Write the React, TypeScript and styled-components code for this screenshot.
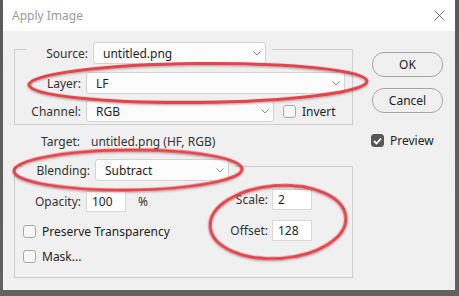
import React from 'react';
import styled, { createGlobalStyle } from 'styled-components';

const GlobalStyle = createGlobalStyle`
  html, body {
    margin: 0;
    padding: 0;
    background: #5c5c5c;
  }
  body {
    font-family: "Noto Sans", "Open Sans", sans-serif;
    font-size: 12px;
    color: #222;
  }
`;

const Screen = styled.div`
  width: 459px;
  height: 296px;
  overflow: hidden;
  background: linear-gradient(180deg, #5a5a5a 0%, #626262 100%);
`;

const Window = styled.div`
  position: relative;
  margin-left: 3px;
  width: 452px;
  height: 290px;
  background: #f0f0f0;
  display: flex;
  flex-direction: column;
`;

const TitleBar = styled.div`
  height: 31px;
  background: #ffffff;
  display: flex;
  align-items: center;
  justify-content: space-between;
  padding: 0 10px 0 9px;
`;

const Title = styled.span`
  color: #9b9b9b;
  font-size: 12px;
`;

const Body = styled.div`
  flex: 1;
  display: flex;
  gap: 19px;
  padding: 18px 0 0 11px;
`;

const LeftCol = styled.div`
  width: 339px;
  display: flex;
  flex-direction: column;
`;

const RightCol = styled.div`
  width: 71px;
  display: flex;
  flex-direction: column;
  padding-top: 3px;
`;

const GroupBox = styled.div<{ mt?: number }>`
  border: 1px solid #cdcdcd;
  margin-top: ${p => p.mt ?? 0}px;
  display: flex;
  flex-direction: column;
`;

const Legend = styled.div<{ ml: number; labelW: number }>`
  align-self: flex-start;
  margin: -8px 0 0 ${p => p.ml}px;
  padding: 0 6px;
  background: #f0f0f0;
  display: grid;
  grid-template-columns: ${p => p.labelW}px auto;
  column-gap: 5px;
  align-items: center;
`;

const Rows = styled.div`
  display: grid;
  grid-template-columns: 66px auto;
  column-gap: 5px;
  row-gap: 6px;
  align-items: center;
  padding: 8px 7px 2px 0;
`;

const Label = styled.span`
  text-align: right;
  color: #333;
  white-space: nowrap;
`;

const Select = styled.div<{ w: number }>`
  box-sizing: border-box;
  width: ${p => p.w}px;
  height: 22px;
  background: #fcfcfc;
  border: 1px solid #d3d3d3;
  border-radius: 3px;
  display: flex;
  align-items: center;
  justify-content: space-between;
  padding: 0 4px 0 9px;
  color: #1e1e28;
`;

const Chevron = () => (
  <svg width="8" height="5" viewBox="0 0 8 5">
    <path d="M0.5 0.5 L4 4 L7.5 0.5" fill="none" stroke="#8a8a8a" strokeWidth="1" />
  </svg>
);

const InlineRow = styled.div`
  display: flex;
  align-items: center;
`;

const Check = styled.span<{ checked?: boolean }>`
  box-sizing: border-box;
  width: 13px;
  height: 13px;
  border-radius: 3px;
  border: 1px solid ${p => (p.checked ? '#585858' : '#a8a8a8')};
  background: ${p => (p.checked ? '#585858' : '#f7f7f7')};
  display: inline-flex;
  align-items: center;
  justify-content: center;
  flex: none;
`;

const CheckText = styled.span`
  margin-left: 6px;
  color: #222;
  white-space: nowrap;
`;

const TargetRow = styled.div`
  display: grid;
  grid-template-columns: 66px auto;
  column-gap: 11px;
  margin-top: 9px;
  line-height: 16px;
`;

const Value = styled.span`
  color: #333;
`;

const BlendBody = styled.div`
  display: flex;
  justify-content: space-between;
  align-items: flex-start;
  padding: 8px 40px 14px 0;
`;

const BlendLeft = styled.div`
  display: flex;
  flex-direction: column;
`;

const BlendRight = styled.div`
  display: grid;
  grid-template-columns: auto 40px;
  column-gap: 4px;
  row-gap: 10px;
  align-items: center;
`;

const OpacityRow = styled.div`
  display: grid;
  grid-template-columns: 66px 40px auto;
  column-gap: 5px;
  align-items: center;
  margin-top: 2px;
`;

const Percent = styled.span`
  margin-left: 7px;
  color: #333;
`;

const NumInput = styled.div`
  box-sizing: border-box;
  width: 40px;
  height: 21px;
  background: #fff;
  border: 1px solid #d8d8d8;
  display: flex;
  align-items: center;
  padding-left: 5px;
  color: #1e1e28;
`;

const CheckRow = styled(InlineRow)<{ mt: number }>`
  padding-left: 8px;
  margin-top: ${p => p.mt}px;
  height: 13px;
`;

const Button = styled.div<{ mt?: number }>`
  box-sizing: border-box;
  height: 25px;
  border: 1px solid #a6a6a6;
  border-radius: 12px;
  background: #f0f0f0;
  display: flex;
  align-items: center;
  justify-content: center;
  color: #222;
  margin-top: ${p => p.mt ?? 0}px;
`;

const PreviewRow = styled(InlineRow)`
  margin-top: 19px;
  margin-left: -1px;
`;

const Marks = styled.svg`
  position: absolute;
  left: 0;
  top: 0;
  width: 452px;
  height: 290px;
  pointer-events: none;
  overflow: visible;
`;

const Tick = () => (
  <svg width="9" height="8" viewBox="0 0 9 8">
    <path d="M1 4 L3.5 6.5 L8 1.5" fill="none" stroke="#fff" strokeWidth="1.8" />
  </svg>
);

export default function App() {
  return (
    <Screen>
      <GlobalStyle />
      <Window>
        <TitleBar>
          <Title>Apply Image</Title>
          <svg width="11" height="11" viewBox="0 0 11 11">
            <path d="M0.5 0.5 L10.5 10.5 M10.5 0.5 L0.5 10.5" stroke="#777" strokeWidth="1" />
          </svg>
        </TitleBar>
        <Body>
          <LeftCol>
            <GroupBox>
              <Legend ml={11} labelW={56}>
                <Label>Source:</Label>
                <Select w={173}>
                  untitled.png
                  <Chevron />
                </Select>
              </Legend>
              <Rows>
                <Label>Layer:</Label>
                <Select w={259}>
                  LF
                  <Chevron />
                </Select>
                <Label>Channel:</Label>
                <InlineRow>
                  <Select w={188}>
                    RGB
                    <Chevron />
                  </Select>
                  <Check style={{ marginLeft: 9 }} />
                  <CheckText>Invert</CheckText>
                </InlineRow>
              </Rows>
            </GroupBox>

            <TargetRow>
              <Label>Target:</Label>
              <Value>untitled.png (HF, RGB)</Value>
            </TargetRow>

            <GroupBox mt={16}>
              <Legend ml={8} labelW={61}>
                <Label>Blending:</Label>
                <Select w={134}>
                  Subtract
                  <Chevron />
                </Select>
              </Legend>
              <BlendBody>
                <BlendLeft>
                  <OpacityRow>
                    <Label>Opacity:</Label>
                    <NumInput>100</NumInput>
                    <Percent>%</Percent>
                  </OpacityRow>
                  <CheckRow mt={13}>
                    <Check />
                    <CheckText>Preserve Transparency</CheckText>
                  </CheckRow>
                  <CheckRow mt={12}>
                    <Check />
                    <CheckText>Mask...</CheckText>
                  </CheckRow>
                </BlendLeft>
                <BlendRight>
                  <Label>Scale:</Label>
                  <NumInput>2</NumInput>
                  <Label>Offset:</Label>
                  <NumInput>128</NumInput>
                </BlendRight>
              </BlendBody>
            </GroupBox>
          </LeftCol>

          <RightCol>
            <Button>OK</Button>
            <Button mt={11}>Cancel</Button>
            <PreviewRow>
              <Check checked>
                <Tick />
              </Check>
              <CheckText>Preview</CheckText>
            </PreviewRow>
          </RightCol>
        </Body>

        <Marks viewBox="0 0 452 290">
          <defs>
            <filter id="shade" x="-10%" y="-30%" width="120%" height="160%">
              <feDropShadow dx="0" dy="1" stdDeviation="1.2" floodColor="#000" floodOpacity="0.35" />
            </filter>
          </defs>
          <g fill="none" stroke="#e8434b" strokeWidth="3" filter="url(#shade)">
            <ellipse cx="195" cy="83" rx="169" ry="19.5" transform="rotate(-0.6 195 83)" />
            <ellipse cx="125" cy="170" rx="114" ry="20" transform="rotate(-0.5 125 170)" />
            <ellipse cx="275" cy="222" rx="68" ry="36.5" transform="rotate(-4 275 222)" />
          </g>
        </Marks>
      </Window>
    </Screen>
  );
}
